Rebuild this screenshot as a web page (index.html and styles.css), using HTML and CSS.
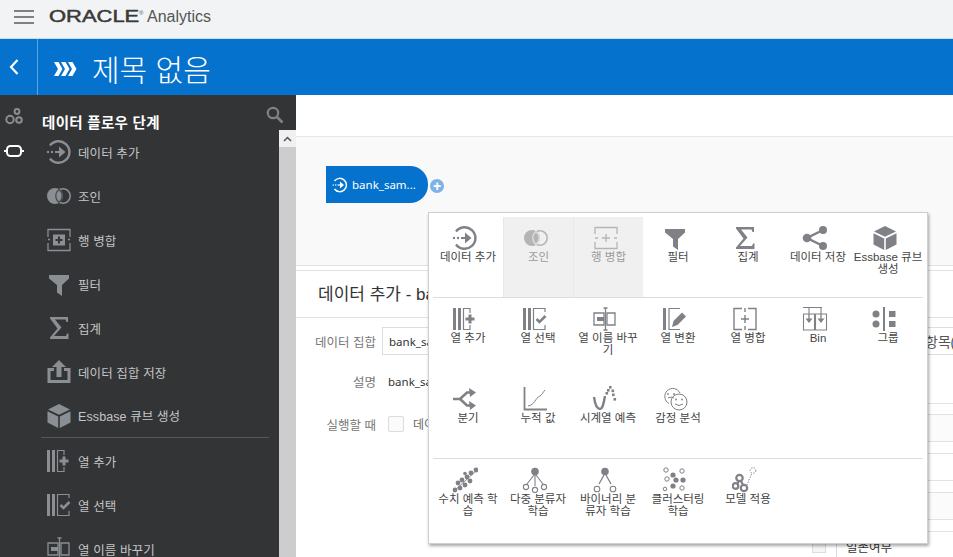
FILE: index.html
```html
<!DOCTYPE html><html lang="ko"><head>
<meta charset="utf-8">
<meta name="viewport" content="width=device-width,initial-scale=1">
<title>Oracle Analytics</title>
<link rel="stylesheet" href="styles.css"></head><body>

<!-- icon sheet -->
<svg class="sheet" xmlns="http://www.w3.org/2000/svg">
  <symbol id="i-add" viewBox="0 0 26 26">
    <path d="M4 6.500A10.800 10.800 0 1 1 4 19.500" fill="none" stroke="currentColor" stroke-width="2.400"/>
    <circle cx="2" cy="13" r="1.200" fill="currentColor"/><circle cx="6" cy="13" r="1.200" fill="currentColor"/>
    <rect x="9" y="12" width="4" height="2" fill="currentColor"/><path d="M13 7.500l6.500 5.500-6.500 5.500z" fill="currentColor"/>
  </symbol>
  <symbol id="i-join" viewBox="0 0 26 26">
    <circle cx="9" cy="13" r="8" fill="currentColor"/>
    <circle cx="17" cy="13" r="7.200" fill="none" stroke="currentColor" stroke-width="1.600"/>
    <path d="M13 6.600a8 8 0 0 1 0 12.800a8 8 0 0 1 0-12.800z" fill="currentColor" stroke="var(--gap)" stroke-width="1.200" opacity=".75"/>
  </symbol>
  <symbol id="i-union" viewBox="0 0 26 26">
    <path d="M2 10V2.500H24V10M2 16V23.500H24V16M2 12.500H4M22 12.500H24" fill="none" stroke="currentColor" stroke-width="1.300"/>
    <rect x="7" y="7.500" width="12" height="11" fill="currentColor"/>
    <path d="M13 9.500v7M9.500 13h7" stroke="var(--gap)" stroke-width="2"/>
  </symbol>
  <symbol id="i-union-off" viewBox="0 0 26 26">
    <path d="M2 9V2.500H24V9M2 17V23.500H24V17M2 13H5M21 13H24M13 9v8M9 13h8" fill="none" stroke="currentColor" stroke-width="1.300"/>
  </symbol>
  <symbol id="i-filter" viewBox="0 0 26 26">
    <path d="M3 4H23V7.500L16 14V25L11 21.500V14L3 7.500z" fill="currentColor"/>
  </symbol>
  <symbol id="i-sigma" viewBox="0 0 26 26">
    <path d="M4 2H22V7H20.500L19.500 4.500H9L15.500 12.500L8 21H20L21 18.500H22.500V24H4V22.500L11.500 13.500L4 3.500z" fill="currentColor"/>
  </symbol>
  <symbol id="i-save" viewBox="0 0 26 26">
    <path d="M1.500 9H8V12H4.500V21H21.500V12H18V9H24.500V24H1.500z" fill="currentColor"/>
    <path d="M13 1L20 8H15.500V18H10.500V8H6z" fill="currentColor"/>
  </symbol>
  <symbol id="i-share" viewBox="0 0 26 26">
    <path d="M21 5L5 13L21 21" fill="none" stroke="currentColor" stroke-width="2.400"/>
    <circle cx="21" cy="5" r="4" fill="currentColor"/><circle cx="5" cy="13" r="4.300" fill="currentColor"/><circle cx="21" cy="21" r="4" fill="currentColor"/>
  </symbol>
  <symbol id="i-cube" viewBox="0 0 26 26">
    <path d="M13 1L24 6.500L13 11.800L2 6.500z" fill="currentColor"/>
    <path d="M1.500 8.300L12.200 13.500V25L1.500 19.500z" fill="currentColor"/>
    <path d="M24.500 8.300L13.800 13.500V25L24.500 19.500z" fill="currentColor"/>
  </symbol>
  <symbol id="i-coladd" viewBox="0 0 26 26">
    <rect x="1" y="2" width="3" height="22" fill="currentColor"/><rect x="6" y="2" width="3" height="22" fill="currentColor"/>
    <path d="M18 7V2.500H11.500V23.500H18V19" fill="none" stroke="currentColor" stroke-width="1.200"/>
    <path d="M18 8.500v9M13.500 13h9" stroke="currentColor" stroke-width="3"/>
  </symbol>
  <symbol id="i-colsel" viewBox="0 0 26 26">
    <rect x="1" y="2" width="3" height="22" fill="currentColor"/><rect x="6" y="2" width="3" height="22" fill="currentColor"/>
    <path d="M23 6V2.500H11.500V23.500H23V19" fill="none" stroke="currentColor" stroke-width="1.200"/>
    <path d="M14.500 13l3 3l6-6" fill="none" stroke="currentColor" stroke-width="2.600"/>
  </symbol>
  <symbol id="i-rename" viewBox="0 0 26 26">
    <path d="M2 7H12V19H2zM15 7H23V19H15z" fill="none" stroke="currentColor" stroke-width="1.300"/>
    <rect x="5" y="11" width="7" height="4" fill="currentColor"/>
    <path d="M13.500 2V24M11.500 2H15.500M11.500 24H15.500" stroke="currentColor" stroke-width="1.300" fill="none"/>
  </symbol>
  <symbol id="i-coltrans" viewBox="0 0 26 26">
    <rect x="1" y="2" width="3" height="22" fill="currentColor"/>
    <path d="M18 2.500H7V23.500H18" fill="none" stroke="currentColor" stroke-width="1.200"/>
    <path d="M10 21L11.500 15L20 6.500L24 10.500L15.500 19z" fill="currentColor"/>
  </symbol>
  <symbol id="i-colmerge" viewBox="0 0 26 26">
    <path d="M10 2.500H2V23.500H10M16 2.500H24V23.500H16M13 2V6M13 20V24M13 9V17M9 13H17" fill="none" stroke="currentColor" stroke-width="1.400"/>
  </symbol>
  <symbol id="i-bin" viewBox="0 0 26 26">
    <path d="M1 1.500H20M7 1.500V8M19 1.500V8M1.500 8H12.500V24H1.500zM13.500 8H24.500V24H13.500z" fill="none" stroke="currentColor" stroke-width="1.100"/>
    <path d="M7 8V13M19 8V13" stroke="currentColor" stroke-width="1.300"/>
    <path d="M3.500 12.500H10.500L7 17zM15.500 12.500H22.500L19 17z" fill="currentColor"/>
  </symbol>
  <symbol id="i-group" viewBox="0 0 26 26">
    <circle cx="4" cy="8" r="3.500" fill="currentColor"/><circle cx="4" cy="18" r="3.500" fill="currentColor"/>
    <rect x="11" y="1" width="2" height="24" fill="currentColor"/>
    <rect x="17" y="5" width="6.500" height="6" fill="currentColor"/><rect x="17" y="15" width="6.500" height="6" fill="currentColor"/>
  </symbol>
  <symbol id="i-branch" viewBox="0 0 26 26">
    <path d="M1 13H8L15 6.500H19M8 13L15 19.500H19" fill="none" stroke="currentColor" stroke-width="2.600"/>
    <path d="M17 2L24 6.500L18 11zM17 15L24 19.500L18 24z" fill="currentColor"/>
  </symbol>
  <symbol id="i-cumul" viewBox="0 0 26 26">
    <path d="M2.500 1V23.500H25" fill="none" stroke="currentColor" stroke-width="1.800"/>
    <path d="M6 20C13 19 13 12 18 10C20 9 21 6 23 4" fill="none" stroke="currentColor" stroke-width="1"/>
  </symbol>
  <symbol id="i-fore" viewBox="0 0 26 26">
    <path d="M2 11C3 18 5 23 8 23C11 23 12 15 13 10" fill="none" stroke="currentColor" stroke-width="2.400"/>
    <g fill="currentColor"><rect x="13.500" y="6" width="2.600" height="2.600"/><rect x="17" y="0" width="2.600" height="2.600"/><rect x="15" y="3" width="2.600" height="2.600"/><rect x="19.500" y="3.500" width="2.600" height="2.600"/><rect x="20" y="7.500" width="2.600" height="2.600"/><rect x="21.500" y="12" width="2.600" height="2.600"/></g>
  </symbol>
  <symbol id="i-senti" viewBox="0 0 26 26">
    <g fill="none" stroke="currentColor" stroke-width="1">
      <path d="M7 17.500A8 8 0 1 1 18 7"/><path d="M6 12q3-2 6 0"/>
      <circle cx="17" cy="16" r="8"/><path d="M13 18q4 3 8 0"/>
    </g>
    <g fill="currentColor"><circle cx="6" cy="8" r=".9"/><circle cx="12" cy="8" r=".9"/><circle cx="14" cy="13.500" r=".9"/><circle cx="20" cy="13.500" r=".9"/></g>
  </symbol>
  <symbol id="i-numeric" viewBox="0 0 26 26">
    <path d="M1 25L25 3" stroke="currentColor" stroke-width=".9"/>
    <g fill="currentColor"><circle cx="3" cy="23" r="2.400"/><circle cx="8" cy="21" r="2.400"/><circle cx="6" cy="16" r="2.400"/><circle cx="13" cy="18" r="2.400"/><circle cx="10" cy="13" r="2.400"/><circle cx="15" cy="10" r="2.400"/><circle cx="18" cy="14" r="2.400"/><circle cx="19" cy="6" r="2.400"/><circle cx="24" cy="3" r="2.400"/><circle cx="13" cy="6.500" r="1.800"/></g>
  </symbol>
  <symbol id="i-multi" viewBox="0 0 26 26">
    <circle cx="13" cy="4.500" r="3.800" fill="currentColor"/>
    <path d="M12 8L5 17M13 8V19M14 8L21 17" fill="none" stroke="currentColor" stroke-width="1.100"/>
    <g fill="none" stroke="currentColor" stroke-width="1.100"><circle cx="4" cy="20" r="2.600"/><circle cx="13" cy="23" r="2.600"/><circle cx="22" cy="20" r="2.600"/></g>
  </symbol>
  <symbol id="i-binary" viewBox="0 0 26 26">
    <circle cx="13" cy="4.500" r="3.800" fill="currentColor"/>
    <path d="M12 8L7 17M14 8L19 17" fill="none" stroke="currentColor" stroke-width="1.300"/>
    <g fill="none" stroke="currentColor" stroke-width="1.100"><circle cx="5" cy="22" r="2.800"/><circle cx="21" cy="22" r="2.800"/></g>
  </symbol>
  <symbol id="i-cluster" viewBox="0 0 26 26">
    <g fill="none" stroke="currentColor" stroke-width="1"><circle cx="4" cy="3" r="2.200"/><circle cx="20" cy="4" r="2.200"/><circle cx="5" cy="12" r="2.200"/><circle cx="20" cy="21" r="2.200"/><circle cx="3" cy="22" r="1.800"/></g>
    <g fill="currentColor"><circle cx="11" cy="8" r="2.600"/><circle cx="14" cy="13" r="2.600"/><circle cx="21" cy="13" r="2.600"/><circle cx="11" cy="19" r="2.600"/></g>
  </symbol>
  <symbol id="i-apply" viewBox="0 0 26 26">
    <g fill="none" stroke="currentColor" stroke-width="2.200"><circle cx="7.500" cy="11" r="3.200"/><circle cx="3.500" cy="19" r="2.800"/><circle cx="12" cy="21" r="3.200"/><path d="M5.500 16L6.500 14M9 14L11 18"/></g>
    <g fill="none" stroke="currentColor" stroke-width=".9" stroke-dasharray="1.500 1.200"><circle cx="21" cy="3.500" r="2.800"/><path d="M19.500 7L15 18"/></g>
  </symbol>
</svg>

<header class="topbar">
  <span class="burger"><i></i><i></i><i></i></span>
  <span class="logo">ORACLE</span><sup class="reg">®</sup>
  <span class="product">Analytics</span>
</header>

<div class="titlebar">
  <div class="back">
    <svg width="12" height="18" viewBox="0 0 12 18"><path d="M9.500 2L3 9l6.500 7" fill="none" stroke="#fff" stroke-width="2.200"/></svg>
  </div>
  <svg class="flowmark" width="23" height="16" viewBox="0 0 23 16"><path d="M0 1h4.500l4 7-4 7H0l4-7zM7 1h4.500l4 7-4 7H7l4-7zM14 1h4.500l4 7-4 7H14l4-7z" fill="#fff"/></svg>
  <h1>제목 없음</h1>
</div>

<div class="workspace">
  <aside class="sidebar">
    <div class="rail">
      <svg class="rail-cubes" width="18" height="18" viewBox="0 0 18 18"><g fill="none" stroke="#8b8d8f" stroke-width="2"><circle cx="5" cy="11.500" r="3.700"/><circle cx="12" cy="3.500" r="2.400"/><circle cx="14" cy="12" r="2.800"/></g></svg>
      <svg class="rail-flow" width="20" height="12" viewBox="0 0 20 12"><rect x="3" y="1" width="14" height="10" rx="3.500" fill="none" stroke="#fff" stroke-width="2"/><path d="M0 6h3M17 6h3" stroke="#fff" stroke-width="2"/></svg>
    </div>
    <div class="steps">
      <div class="steps-head">
        <span>데이터 플로우 단계</span>
        <svg width="18" height="18" viewBox="0 0 18 18"><circle cx="7" cy="7" r="5.200" fill="none" stroke="#7f8184" stroke-width="2.200"/><path d="M11 11l5.500 5.500" stroke="#7f8184" stroke-width="2.600"/></svg>
      </div>
      <div class="steps-body">
        <ul class="step-list">
          <li><svg><use href="#i-add"/></svg>데이터 추가</li>
          <li><svg><use href="#i-join"/></svg>조인</li>
          <li><svg><use href="#i-union"/></svg>행 병합</li>
          <li><svg><use href="#i-filter"/></svg>필터</li>
          <li><svg><use href="#i-sigma"/></svg>집계</li>
          <li><svg><use href="#i-save"/></svg>데이터 집합 저장</li>
          <li class="last-group"><svg><use href="#i-cube"/></svg>Essbase 큐브 생성</li>
          <li><svg><use href="#i-coladd"/></svg>열 추가</li>
          <li><svg><use href="#i-colsel"/></svg>열 선택</li>
          <li><svg><use href="#i-rename"/></svg>열 이름 바꾸기</li>
        </ul>
        <div class="scrollbar">
          <div class="scroll-up"><svg width="9" height="6" viewBox="0 0 9 6"><path d="M1 5l3.500-3.500L8 5" fill="none" stroke="#555" stroke-width="1.500"/></svg></div>
        </div>
      </div>
    </div>
  </aside>

  <main class="main">
    <div class="main-top"></div>
    <div class="canvas">
      <div class="node">
        <svg width="16" height="16"><use href="#i-add"/></svg>
        <span>bank_sam...</span>
      </div>
      <span class="node-plus">+</span>
    </div>
    <div class="details">
      <h2>데이터 추가 - bank_sample</h2>
      <div class="field first">
        <label>데이터 집합</label>
        <div class="input-line"><span>bank_sample</span><span class="input-right">항목(</span></div>
      </div>
      <div class="lower">
        <div class="form-left">
          <div class="field">
            <label>설명</label>
            <span class="val">bank_sample</span>
          </div>
          <div class="field">
            <label>실행할 때</label>
            <span class="check"></span>
            <span class="val dim">데이터 집합</span>
          </div>
        </div>
        <div class="col-list">
          <div class="col-row head"></div>
          <div class="col-row tint"></div>
          <div class="col-row"></div>
          <div class="col-row tint"></div>
          <div class="col-row last"><span class="col-ico"></span><span class="col-name">일존여부</span></div>
        </div>
      </div>
    </div>
  </main>
</div>

<!-- step picker, over the page -->
<div class="picker">
  <div class="pick-row">
    <div class="pick"><svg><use href="#i-add"/></svg>데이터 추가</div>
    <div class="pick off"><svg><use href="#i-join"/></svg>조인</div>
    <div class="pick off"><svg><use href="#i-union-off"/></svg>행 병합</div>
    <div class="pick"><svg><use href="#i-filter"/></svg>필터</div>
    <div class="pick"><svg><use href="#i-sigma"/></svg>집계</div>
    <div class="pick"><svg><use href="#i-share"/></svg>데이터 저장</div>
    <div class="pick"><svg><use href="#i-cube"/></svg>Essbase 큐브<br>생성</div>
  </div>
  <div class="pick-row wide">
    <div class="pick"><svg><use href="#i-coladd"/></svg>열 추가</div>
    <div class="pick"><svg><use href="#i-colsel"/></svg>열 선택</div>
    <div class="pick"><svg><use href="#i-rename"/></svg>열 이름 바꾸<br>기</div>
    <div class="pick"><svg><use href="#i-coltrans"/></svg>열 변환</div>
    <div class="pick"><svg><use href="#i-colmerge"/></svg>열 병합</div>
    <div class="pick"><svg><use href="#i-bin"/></svg>Bin</div>
    <div class="pick"><svg><use href="#i-group"/></svg>그룹</div>
    <div class="pick"><svg><use href="#i-branch"/></svg>분기</div>
    <div class="pick"><svg><use href="#i-cumul"/></svg>누적 값</div>
    <div class="pick"><svg><use href="#i-fore"/></svg>시계열 예측</div>
    <div class="pick"><svg><use href="#i-senti"/></svg>감정 분석</div>
  </div>
  <div class="pick-row">
    <div class="pick"><svg><use href="#i-numeric"/></svg>수치 예측 학<br>습</div>
    <div class="pick"><svg><use href="#i-multi"/></svg>다중 분류자<br>학습</div>
    <div class="pick"><svg><use href="#i-binary"/></svg>바이너리 분<br>류자 학습</div>
    <div class="pick"><svg><use href="#i-cluster"/></svg>클러스터링<br>학습</div>
    <div class="pick"><svg><use href="#i-apply"/></svg>모델 적용</div>
  </div>
</div>

</body></html>
```

FILE: styles.css
```css
/* ── base ─────────────────────────────────── */
*{box-sizing:border-box}
html,body{height:100%}
body{margin:0;height:557px;overflow:hidden;position:relative;background:#fff;color:#333;
     font-family:"Liberation Sans","Noto Sans CJK KR",sans-serif}
.sheet{display:none}

/* ── header bars ──────────────────────────── */
.topbar{height:39px;background:#f2f3f4;display:flex;align-items:center;padding:0 0 5px 14px;border-bottom:1px solid #c9dcec}
.burger{width:20px;display:flex;flex-direction:column;gap:4px;margin-right:15px}
.burger i{display:block;height:2px;background:#808080}
.logo{display:inline-block;width:70px;font-weight:normal;font-size:16.500px;color:#3a3a3a;-webkit-text-stroke:.5px #3a3a3a;
      transform:scaleX(1.330);transform-origin:left center}
.reg{font-size:6px;color:#555;margin:-8px 0 0 20px;width:5px}
.product{font-size:16px;color:#555;margin-left:3px}

.titlebar{height:56px;background:#0572ce;display:flex;align-items:center;color:#fff}
.back{width:38px;height:100%;border-right:1px solid #5aa3df;display:flex;align-items:center;justify-content:center;padding-right:9px}
.flowmark{margin:4px 15px 0 16px}
h1{margin:8px 0 0;font-size:30px;font-weight:300;line-height:1}

/* ── left panel ───────────────────────────── */
.workspace{display:flex;height:462px}
.sidebar{width:296px;flex:none;background:#323436;display:flex;overflow:hidden}
.rail{width:37px;flex:none;display:flex;flex-direction:column;align-items:center;padding-top:13px;padding-right:9px}
.rail-flow{margin-top:19px}
.steps{flex:1;min-width:0;display:flex;flex-direction:column}
.steps-head{height:35px;flex:none;display:flex;align-items:center;justify-content:space-between;
            padding:17px 12px 0 5px;color:#fff;font-weight:bold;font-size:14.500px;letter-spacing:.3px}
.steps-head svg{margin-top:-12px}
.steps-body{flex:1;display:flex;min-height:0}
.step-list{list-style:none;margin:0;padding:0;flex:1;color:#c4c5c6;font-size:12.500px;letter-spacing:.1px}
.step-list li{height:44px;display:flex;align-items:center;margin-left:4px;margin-right:10px;padding-left:5px}
.step-list li svg{width:26px;height:26px;margin-right:6px;color:#8b8e93;flex:none;--gap:#323436}
.step-list .last-group{border-bottom:1px solid #55575a;height:44px;margin-bottom:1px}
.scrollbar{width:17px;flex:none;background:#cdcdcd}
.scroll-up{height:17px;background:#f0f0f0;display:flex;align-items:center;justify-content:center}

/* ── right side ───────────────────────────── */
.main{flex:1;min-width:0;display:flex;flex-direction:column;overflow:hidden}
.main-top{height:42px;flex:none;border-bottom:1px solid #e6e6e6}
.canvas{height:129px;flex:none;background:#f9f9f9;border-bottom:1px solid #e2e2e2;padding:29px 0 0 30px;display:flex;align-items:flex-start}
.node{width:102px;height:37px;background:#0572ce;border-radius:0 18px 18px 0;color:#fff;display:flex;align-items:center;
      gap:4px;padding-left:6px;font-family:"Noto Sans",sans-serif;font-size:11.500px}
.node-plus{width:14px;height:14px;border-radius:50%;background:#7fb3e6;color:#fff;font:bold 14px/14px "Liberation Sans",sans-serif;
           text-align:center;margin:13px 0 0 2px}
.details{flex:1;margin-top:4px;border-top:1px solid #e2e2e2;min-height:0}
.details h2{margin:0;height:47px;padding:9px 0 0 22px;font-weight:normal;font-size:17px;color:#333;border-bottom:1px solid #e2e2e2;white-space:nowrap}
.field{display:flex;align-items:center;font-size:12.500px}
.field label{width:80px;flex:none;text-align:right;margin-right:6px;color:#777}
.field.first{height:37px;padding-top:9px}
.input-line{flex:1;height:28px;border:1px solid #ddd;border-right:0;display:flex;align-items:center;padding-left:6px;
            font-family:"Noto Sans","Noto Sans CJK KR",sans-serif;font-size:11.500px;color:#333;white-space:nowrap;position:relative}
.input-right{margin-left:auto;width:28px;overflow:hidden;font-size:14px;color:#555}
.lower{display:flex}
.form-left{flex:1}
.form-left .field{height:34px}
.form-left .field:first-child{height:52px}
.val{font-family:"Noto Sans","Noto Sans CJK KR",sans-serif;font-size:11.500px;margin-left:6px;white-space:nowrap}
.val.dim{margin-left:9px;font-size:12px;color:#666}
.check{width:16px;height:16px;margin-left:6px;border:1px solid #ddd;background:#fbfbfb;border-radius:2px}
.col-list{width:145px;flex:none;padding-top:48px}
.col-row{height:28px;border-top:1px solid #e2e2e2;border-bottom:1px solid #e2e2e2;margin-bottom:11px}
.col-row.head{height:11px;border-bottom:0;margin-bottom:0}
.col-row.tint{background:#fbfbfb}
.col-row.last{height:26px;display:flex;align-items:center;border-bottom:0;margin:0;font-size:12.500px;color:#333;padding:4px 0 0 4px}
.col-ico{width:14px;height:12px;border:1px solid #ddd;background:#f3f5f8}
.col-name{margin-left:10px;padding-left:9px;border-left:1px solid #d5dce4;height:100%;display:flex;align-items:center}

/* ── step picker popup ────────────────────── */
.picker{position:absolute;left:428px;top:212px;width:500px;height:332px;background:#fff;padding:4px 4px 0 4px;
        border:1px solid #d0d0d0;box-shadow:1px 2px 3px rgba(0,0,0,.35)}
.pick-row{display:grid;grid-template-columns:repeat(7,70px);grid-auto-rows:80px;border-bottom:1px solid #ddd;color:#444}
.pick-row:last-child{border-bottom:0}
.pick{display:flex;flex-direction:column;align-items:center;text-align:center;padding-top:8px;
      font-size:11.500px;line-height:12px;white-space:nowrap;--gap:#fff}
.pick svg{width:26px;height:26px;margin-right:6px;color:#7f8186;flex:none}
.pick.off{background:#f0f0f0;color:#9a9a9a;border-left:1px solid #e8e8e8;--gap:#f0f0f0}
.pick.off svg{color:#b5b5b5}
```
